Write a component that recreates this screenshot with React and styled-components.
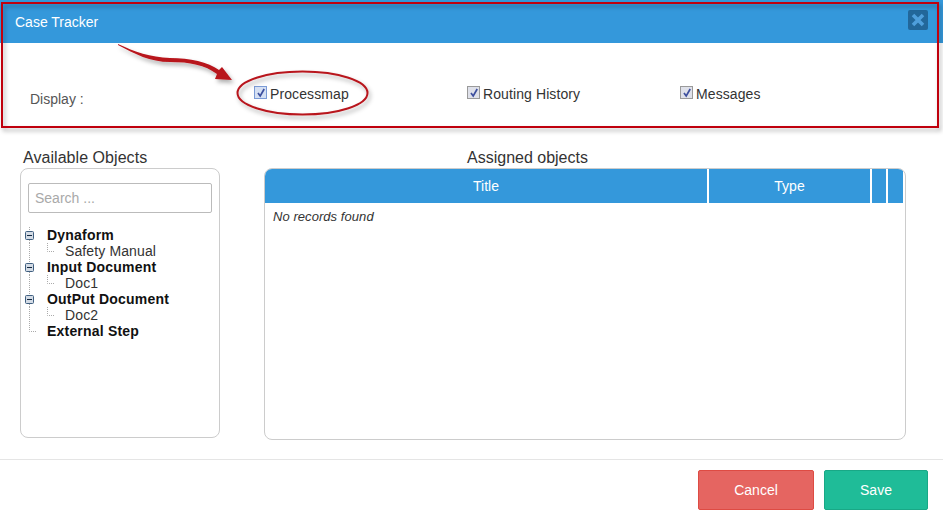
import React from "react";
import styled, { createGlobalStyle } from "styled-components";

const Global = createGlobalStyle`
  html, body { margin: 0; padding: 0; background: #fff; }
  body { font-family: "Liberation Sans", Arial, sans-serif; color: #333; }
`;
const Page = styled.div`
  position: relative; width: 943px; height: 520px; overflow: hidden; background: #fff;
`;
const Header = styled.header`
  height: 43px; box-sizing: border-box; background: #3498db; color: #fff;
  display: flex; justify-content: space-between; align-items: flex-start;
  padding: 14px 15px 0 15px; font-size: 14px; line-height: 16px;
`;
const Close = styled.button`
  width: 20px; height: 20px; margin-top: -4px; padding: 0; border: 0; border-radius: 2px;
  background: #22679a; display: flex; align-items: center; justify-content: center;
`;
const DisplayRow = styled.section`
  height: 84px; display: grid; grid-template-columns: 224px 213px 213px 1fr;
  padding-left: 30px; align-items: start; font-size: 14px; line-height: 16px;
`;
const DisplayLabel = styled.span`
  color: #555; padding-top: 48px;
`;
const Check = styled.label`
  display: flex; align-items: center; gap: 3px; padding-top: 43px; color: #333; letter-spacing: 0.1px;
`;
const Box = styled.span`
  width: 11px; height: 11px; border: 1px solid ${p => (p.$active ? "#7b9bd6" : "#9a9a9a")};
  background: ${p => (p.$active ? "#d5e0f3" : "#dfe1ea")};
  display: flex; align-items: center; justify-content: center; margin-top: -3px;
`;
const Titles = styled.div`
  display: grid; grid-template-columns: 244px 640px; padding-left: 20px;
  height: 41px; align-items: end; box-sizing: border-box;
  font-size: 16px; line-height: 18px; color: #333;
`;
const AvailTitle = styled.span`
  padding-left: 3px; padding-bottom: 1px; letter-spacing: 0.05px;
`;
const AssignTitle = styled.span`
  padding-left: 203px; padding-bottom: 1px;
`;
const Panels = styled.div`
  display: grid; grid-template-columns: 200px 642px; column-gap: 44px; padding-left: 20px;
`;
const TreePanel = styled.aside`
  height: 270px; box-sizing: border-box; border: 1px solid #ccc; border-radius: 8px;
  padding: 14px 7px 0;
`;
const Search = styled.input`
  width: 100%; height: 30px; box-sizing: border-box; border: 1px solid #bbb; border-radius: 2px;
  padding: 0 6px; font: 14px "Liberation Sans", Arial, sans-serif; outline: none;
  &::placeholder { color: #a9a9a9; opacity: 1; }
`;
const Tree = styled.ul`
  list-style: none; margin: 14px 0 0; padding: 0; position: relative; font-size: 14px; color: #222;
`;
const Node = styled.li`
  height: 16px; line-height: 16px; position: relative; white-space: nowrap;
  padding-left: ${p => (p.$leaf ? 37 : 19)}px; font-weight: ${p => (p.$leaf ? 400 : 700)};
  letter-spacing: ${p => (p.$leaf ? 0.12 : 0.2)}px; color: ${p => (p.$leaf ? "#333" : "#111")};
`;
const Connector = styled.svg`
  position: absolute; left: ${p => p.$x}px; top: 0; width: 16px; height: 16px;
`;
const AssignedPanel = styled.section`
  height: 272px; box-sizing: border-box; border: 1px solid #ccc; border-radius: 8px;
  padding-right: 2px; overflow: hidden;
`;
const TableHead = styled.div`
  display: grid; grid-template-columns: 442px 161px 14px 15px; column-gap: 2px; height: 34px;
`;
const HeadCell = styled.div`
  background: #3498db; color: #fff; font-size: 14px; display: flex;
  align-items: center; justify-content: center;
`;
const Empty = styled.div`
  font-size: 13px; font-style: italic; color: #333; padding: 6px 8px; line-height: 15px; letter-spacing: 0.06px;
`;
const Footer = styled.footer`
  margin-top: 19px; border-top: 1px solid #e5e5e5; height: 60px; box-sizing: border-box;
  display: flex; justify-content: flex-end; gap: 10px; padding: 10px 15px 0 0;
`;
const Button = styled.button`
  width: ${p => p.$w}px; height: 40px; border-radius: 2px; border: 1px solid ${p => p.$border};
  background: ${p => p.$bg}; color: #fff; font: 14px "Liberation Sans", Arial, sans-serif; padding: 0;
`;
const Annotation = styled.svg`
  position: absolute; left: 0; top: 0; width: 943px; height: 520px; pointer-events: none;
`;

const CheckMark = () => (
  <svg width="10" height="10" viewBox="0 0 10 10">
    <path d="M2 5 L4.2 8 L8.2 1" fill="none" stroke="#3d4f9e" strokeWidth="1.7" />
  </svg>
);

const Option = ({ label, active }) => (
  <Check>
    <Box $active={active}><CheckMark /></Box>
    {label}
  </Check>
);

const Minus = () => (
  <>
    <rect x="4.5" y="4.5" width="8" height="8" rx="1" fill="#d3dbe5" stroke="#3f5f80" />
    <path d="M6 8.5 H11" stroke="#14283f" strokeWidth="1" />
  </>
);

const dotStyle = { stroke: "#aaa", strokeDasharray: "1 1", fill: "none" };

const Branch = ({ label }) => (
  <Node>
    <Connector $x={-7} viewBox="0 0 16 16">
      <path d="M8.5 0 V4" style={dotStyle} />
      <path d="M8.5 13 V16" style={dotStyle} />
      <Minus />
    </Connector>
    {label}
  </Node>
);

const Leaf = ({ label }) => (
  <Node $leaf>
    <Connector $x={-7} viewBox="0 0 16 16">
      <path d="M8.5 0 V16" style={dotStyle} />
    </Connector>
    <Connector $x={17} viewBox="0 0 16 16">
      <path d="M2.5 0 V8.5 H9" style={dotStyle} />
    </Connector>
    {label}
  </Node>
);

const LastNode = ({ label }) => (
  <Node>
    <Connector $x={-7} viewBox="0 0 16 16">
      <path d="M8.5 0 V8.5 H15" style={dotStyle} />
    </Connector>
    {label}
  </Node>
);

export default function App() {
  return (
    <Page>
      <Global />
      <Header>
        Case Tracker
        <Close aria-label="close">
          <svg width="16" height="16" viewBox="0 0 16 16">
            <path d="M3 3 L13 13 M13 3 L3 13" stroke="#4f9fdc" strokeWidth="3.6" />
          </svg>
        </Close>
      </Header>
      <DisplayRow>
        <DisplayLabel>Display :</DisplayLabel>
        <Option label="Processmap" active />
        <Option label="Routing History" />
        <Option label="Messages" />
      </DisplayRow>
      <Titles>
        <AvailTitle>Available Objects</AvailTitle>
        <AssignTitle>Assigned objects</AssignTitle>
      </Titles>
      <Panels>
        <TreePanel>
          <Search placeholder="Search ..." />
          <Tree>
            <Branch label="Dynaform" />
            <Leaf label="Safety Manual" />
            <Branch label="Input Document" />
            <Leaf label="Doc1" />
            <Branch label="OutPut Document" />
            <Leaf label="Doc2" />
            <LastNode label="External Step" />
          </Tree>
        </TreePanel>
        <AssignedPanel>
          <TableHead>
            <HeadCell>Title</HeadCell>
            <HeadCell>Type</HeadCell>
            <HeadCell />
            <HeadCell />
          </TableHead>
          <Empty>No records found</Empty>
        </AssignedPanel>
      </Panels>
      <Footer>
        <Button $w={116} $bg="#e56561" $border="#de4b43">Cancel</Button>
        <Button $w={104} $bg="#1fbc98" $border="#19a886">Save</Button>
      </Footer>
      <Annotation viewBox="0 0 943 520">
        <defs>
          <filter id="sh" x="-5%" y="-20%" width="110%" height="140%">
            <feDropShadow dx="2" dy="3" stdDeviation="2.2" floodColor="#000" floodOpacity="0.32" />
          </filter>
        </defs>
        <g filter="url(#sh)">
          <rect x="2" y="3" width="936" height="124" fill="none" stroke="#c00010" strokeWidth="2" />
          <ellipse cx="302.5" cy="93" rx="65" ry="21.5" fill="none" stroke="#b8141c" strokeWidth="2" />
          <path d="M118 44 C135 52 150 57 170 58 C190 58 208 62 219 70 L222 67 L232 80 L215 79 L217 74 C205 65 190 62 170 62 C150 62 135 54 118 45 Z" fill="#b8141c" />
        </g>
      </Annotation>
    </Page>
  );
}
